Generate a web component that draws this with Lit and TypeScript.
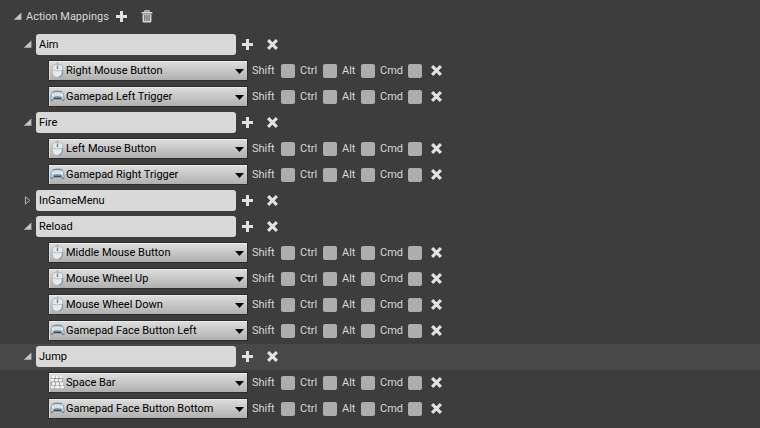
import { LitElement, html, css, svg, nothing } from "lit";
import { customElement, property, state } from "lit/decorators.js";
import { classMap } from "lit/directives/class-map.js";

type Device = "mouse" | "gamepad" | "keyboard";

interface Action {
  name: string;
  open: boolean;
  active?: boolean;
  keys: string[];
}

const KEYS: Record<string, Device> = {
  "Left Mouse Button": "mouse",
  "Right Mouse Button": "mouse",
  "Middle Mouse Button": "mouse",
  "Mouse Wheel Up": "mouse",
  "Mouse Wheel Down": "mouse",
  "Gamepad Left Trigger": "gamepad",
  "Gamepad Right Trigger": "gamepad",
  "Gamepad Face Button Left": "gamepad",
  "Gamepad Face Button Bottom": "gamepad",
  "Space Bar": "keyboard",
};

const MODIFIERS = ["Shift", "Ctrl", "Alt", "Cmd"];

const plusIcon = html`<svg width="11" height="11" viewBox="0 0 11 11" aria-hidden="true">
  <path d="M4 0h3v4h4v3H7v4H4V7H0V4h4z" fill="#e0e0e0" />
</svg>`;

const crossIcon = html`<svg width="11" height="11" viewBox="0 0 11 11" aria-hidden="true">
  <path d="M2.2 2.2l6.6 6.6M8.8 2.2L2.2 8.8" stroke="#e2e2e2" stroke-width="3.1" stroke-linecap="square" />
</svg>`;

const trashIcon = html`<svg width="12" height="13" viewBox="0 0 12 13" aria-hidden="true">
  <path d="M4 2V0.9h4V2" fill="none" stroke="#d8d8d8" stroke-width="1.2" />
  <path d="M0.7 2h10.6v1.6H0.7z" fill="#d8d8d8" />
  <path d="M1.6 4.2h8.8v7.2q0 1.1-1.1 1.1H2.7q-1.1 0-1.1-1.1z" fill="#d8d8d8" />
  <path d="M3.9 5v6M6 5v6M8.1 5v6" stroke="#484848" stroke-width="1" />
</svg>`;

const openArrow = html`<svg width="9" height="9" viewBox="0 0 9 9" aria-hidden="true">
  <path d="M8.4 0.4v7.4H0.8z" fill="#c4c4c4" />
</svg>`;

const closedArrow = html`<svg width="9" height="9" viewBox="0 0 9 9" aria-hidden="true">
  <path d="M2.4 0.7v7.4L6.8 4.4z" fill="none" stroke="#b4b4b4" stroke-width="1" />
</svg>`;

const deviceIcons = {
  mouse: svg`
    <path d="M7.5 3V0.4" stroke="#9aa3aa" stroke-width="1.2" />
    <path d="M2.2 6.4q0-4.2 5.3-4.2t5.3 4.2v3.8q0 5.2-5.3 5.2t-5.3-5.2z" fill="#e6eaed" stroke="#a5b0b9" stroke-width="0.9" />
    <path d="M2.8 8.2q4.7 1.6 9.4 0" fill="none" stroke="#b0bac2" stroke-width="0.9" />
    <path d="M12.4 8v2.6q-0.3 3.8-3.8 4.4" fill="none" stroke="#8598a8" stroke-width="1.2" />
    <path d="M7.5 3.4v3.8" stroke="#78858f" stroke-width="1.5" />`,
  gamepad: svg`
    <path d="M3 3.6q4.5-1 9 0l1.2 2.2 1.3 5.8q-0.3 1.6-1.8 1.2l-2-2.2H4.3l-2 2.2q-1.5 0.4-1.8-1.2l1.3-5.8z" fill="#c3d0da" stroke="#8f9ca7" stroke-width="0.9" />
    <path d="M3.2 3.7q4.3-0.9 8.6 0" fill="none" stroke="#7f8a94" stroke-width="1.2" />
    <path d="M4.6 5h5.8v3.6H4.6z" fill="#dbe2e7" />
    <path d="M3.4 9q4.1-1.6 8.2 0l0.4 1.6H3z" fill="#6f8ca4" />
    <path d="M3.8 10.6h7.4" stroke="#3b5064" stroke-width="1.4" />
    <path d="M3 5.6v2.8M1.9 7h2.2M12 5.6v2.8M10.9 7h2.2" stroke="#f4f7f9" stroke-width="1.1" />
    <path d="M0.9 12.5l2.2-1M14.1 12.5l-2.2-1" stroke="#61768a" stroke-width="1.1" />`,
  keyboard: svg`
    <path d="M2 2.2h10l2.4 11.6H1z" fill="#8d9093" />
    <g fill="#f3f4f5">
      <rect x="2" y="1.6" width="3" height="2.6" rx="0.6" />
      <rect x="5.7" y="1.6" width="3" height="2.6" rx="0.6" />
      <rect x="9.4" y="1.6" width="2.8" height="2.6" rx="0.6" />
      <rect x="0.9" y="4.9" width="3.2" height="2.6" rx="0.6" />
      <rect x="4.8" y="4.9" width="3.2" height="2.6" rx="0.6" />
      <rect x="8.7" y="4.9" width="3.6" height="2.6" rx="0.6" />
      <rect x="2" y="8.2" width="3.2" height="2.7" rx="0.6" />
      <rect x="5.9" y="8.2" width="3.2" height="2.7" rx="0.6" />
      <rect x="9.8" y="8.2" width="3.6" height="2.7" rx="0.6" />
      <rect x="0.9" y="11.6" width="3.4" height="2.6" rx="0.6" />
      <rect x="5" y="11.6" width="4.6" height="2.6" rx="0.6" />
      <rect x="10.3" y="11.6" width="3.8" height="2.6" rx="0.6" />
    </g>`,
};

const controls = css`
  * {
    box-sizing: border-box;
  }
  button {
    display: flex;
    align-items: center;
    justify-content: center;
    flex: none;
    margin: 0;
    padding: 0;
    border: 0;
    background: none;
    cursor: pointer;
  }
  svg {
    display: block;
    flex: none;
  }
`;

@customElement("key-binding")
export class KeyBinding extends LitElement {
  @property() key = "Space Bar";

  static styles = [
    controls,
    css`
      :host {
        display: flex;
        align-items: center;
        height: 26px;
        padding: 0 0 1px 48px;
      }
      .picker {
        position: relative;
        flex: none;
        width: 200px;
        height: 21px;
      }
      select {
        appearance: none;
        display: block;
        width: 100%;
        height: 100%;
        margin: 0;
        padding: 1px 16px 0 17px;
        border: 1px solid #2c2c2c;
        border-radius: 1px;
        background: linear-gradient(#dedede, #c9c9c9 45%, #b0b0b0);
        box-shadow: inset 0 1px #ececec, inset 1px 0 #dcdcdc;
        color: #000;
        font: inherit;
      }
      .device {
        position: absolute;
        left: 2px;
        top: 2px;
        pointer-events: none;
      }
      .drop {
        position: absolute;
        right: 4px;
        top: 9px;
        pointer-events: none;
      }
      .modifiers {
        display: grid;
        grid-template-columns: 43px 37px 33px 42px;
        column-gap: 5px;
        margin: 0 8px 0 4px;
      }
      label {
        display: flex;
        align-items: center;
        justify-content: space-between;
      }
      input {
        appearance: none;
        flex: none;
        width: 14px;
        height: 14px;
        margin: 0;
        border-radius: 2px;
        background: #adadad;
      }
      input:checked {
        background: #e8a33c;
      }
      button {
        width: 13px;
        height: 16px;
      }
    `,
  ];

  render() {
    return html`
      <div class="picker">
        <select
          aria-label="Key"
          @change=${(e: Event) => (this.key = (e.target as HTMLSelectElement).value)}
        >
          ${Object.keys(KEYS).map(
            (k) => html`<option ?selected=${k === this.key}>${k}</option>`
          )}
        </select>
        <svg class="device" width="15" height="16" viewBox="0 0 15 16" aria-hidden="true">
          ${deviceIcons[KEYS[this.key]]}
        </svg>
        <svg class="drop" width="9" height="5" viewBox="0 0 9 5" aria-hidden="true">
          <path d="M0 0h9L4.5 5z" fill="#0a0a0a" />
        </svg>
      </div>
      <div class="modifiers">
        ${MODIFIERS.map((m) => html`<label>${m}<input type="checkbox" /></label>`)}
      </div>
      <button
        aria-label="Remove key"
        @click=${() => this.dispatchEvent(new CustomEvent("remove"))}
      >
        ${crossIcon}
      </button>
    `;
  }
}

@customElement("app-root")
export class AppRoot extends LitElement {
  @state() private open = true;

  @state() private actions: Action[] = [
    { name: "Aim", open: true, keys: ["Right Mouse Button", "Gamepad Left Trigger"] },
    { name: "Fire", open: true, keys: ["Left Mouse Button", "Gamepad Right Trigger"] },
    { name: "InGameMenu", open: false, keys: ["Space Bar"] },
    {
      name: "Reload",
      open: true,
      keys: [
        "Middle Mouse Button",
        "Mouse Wheel Up",
        "Mouse Wheel Down",
        "Gamepad Face Button Left",
      ],
    },
    {
      name: "Jump",
      open: true,
      active: true,
      keys: ["Space Bar", "Gamepad Face Button Bottom"],
    },
  ];

  static styles = [
    controls,
    css`
      :host {
        display: block;
        min-height: 100vh;
        background: #3d3d3d;
        color: #d6d6d6;
        font: 11px/16px Roboto, "Liberation Sans", sans-serif;
      }
      header {
        display: flex;
        align-items: center;
        height: 32px;
        padding-left: 13px;
      }
      h1 {
        margin: 0 7px 0 4px;
        padding-top: 1px;
        font: inherit;
      }
      .toggle {
        width: 9px;
        height: 16px;
      }
      .tool {
        width: 12px;
        height: 16px;
      }
      .tool + .tool {
        margin-left: 13px;
      }
      .action {
        display: flex;
        align-items: center;
        height: 26px;
        padding: 0 0 1px 23px;
      }
      .active {
        background: #484848;
      }
      .name {
        width: 200px;
        height: 21px;
        margin: 0 5px 0 4px;
        padding: 0 3px 1px;
        border: 0;
        border-radius: 3px;
        background: #d9d9d9;
        color: #000;
        font: inherit;
      }
    `,
  ];

  private change(index: number, change: Partial<Action>) {
    this.actions = this.actions.map((a, i) => (i === index ? { ...a, ...change } : a));
  }

  private renderAction(action: Action, index: number) {
    return html`
      <section>
        <div class=${classMap({ action: true, active: !!action.active })}>
          <button
            class="toggle"
            aria-label="Toggle ${action.name}"
            aria-expanded=${action.open}
            @click=${() => this.change(index, { open: !action.open })}
          >
            ${action.open ? openArrow : closedArrow}
          </button>
          <input class="name" type="text" aria-label="Action name" .value=${action.name} />
          <button
            class="tool"
            aria-label="Add key"
            @click=${() => this.change(index, { keys: [...action.keys, "Space Bar"] })}
          >
            ${plusIcon}
          </button>
          <button
            class="tool"
            aria-label="Remove action"
            @click=${() => (this.actions = this.actions.filter((a) => a !== action))}
          >
            ${crossIcon}
          </button>
        </div>
        ${action.open
          ? action.keys.map(
              (key, k) => html`<key-binding
                .key=${key}
                @remove=${() =>
                  this.change(index, { keys: action.keys.filter((_, i) => i !== k) })}
              ></key-binding>`
            )
          : nothing}
      </section>
    `;
  }

  render() {
    return html`
      <header>
        <button
          class="toggle"
          aria-label="Toggle action mappings"
          aria-expanded=${this.open}
          @click=${() => (this.open = !this.open)}
        >
          ${this.open ? openArrow : closedArrow}
        </button>
        <h1>Action Mappings</h1>
        <button
          class="tool"
          aria-label="Add action"
          @click=${() =>
            (this.actions = [
              ...this.actions,
              { name: "NewAction", open: true, keys: ["Space Bar"] },
            ])}
        >
          ${plusIcon}
        </button>
        <button class="tool" aria-label="Remove all actions" @click=${() => (this.actions = [])}>
          ${trashIcon}
        </button>
      </header>
      ${this.open ? this.actions.map((a, i) => this.renderAction(a, i)) : nothing}
    `;
  }
}
